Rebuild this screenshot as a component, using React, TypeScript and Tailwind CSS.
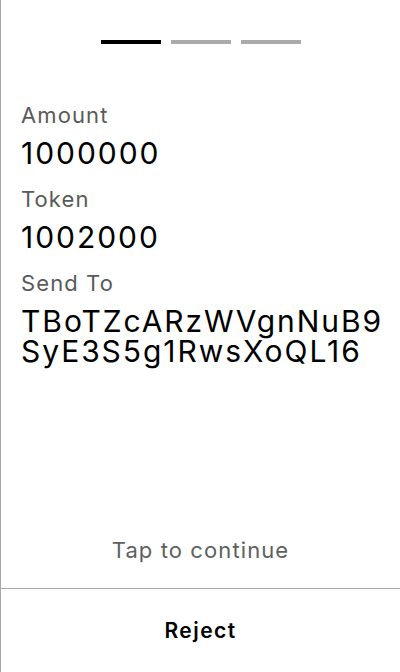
import React from "react";

const fields = [
  { label: "Amount", value: "1000000" },
  { label: "Token", value: "1002000" },
  { label: "Send To", value: "TBoTZcARzWVgnNuB9SyE3S5g1RwsXoQL16" },
];

const App = () => {
  return (
    <div
      className="flex flex-col h-[672px] w-[400px] bg-white border-l border-[#a9a9a9] text-black"
      style={{ fontFamily: "Inter, 'Noto Sans', sans-serif" }}
    >
      <div className="flex justify-center gap-[10px] pt-[40px]">
        <div className="h-[4px] w-[60px] bg-black" />
        <div className="h-[4px] w-[60px] bg-[#aaaaaa]" />
        <div className="h-[4px] w-[60px] bg-[#aaaaaa]" />
      </div>

      <div className="flex flex-col flex-1 pl-[20px] pr-[4px] pt-[57px]">
        {fields.map((field, i) => (
          <div key={field.label} className={i > 0 ? "mt-[17px]" : ""}>
            <div className="text-[22px] leading-[28px] tracking-[0.05em] text-[#5a5a5a]">
              {field.label}
            </div>
            <div className="mt-[9px] text-[30px] leading-[30px] tracking-[0.065em] break-all">
              {field.value}
            </div>
          </div>
        ))}
      </div>

      <div className="pb-[24px] text-center text-[22px] leading-[28px] tracking-[0.05em] text-[#5f5f5f]">
        Tap to continue
      </div>
      <div className="h-[84px] flex items-center justify-center border-t border-[#aaaaaa] text-[21px] tracking-[0.07em] font-semibold">
        Reject
      </div>
    </div>
  );
};

export default App;
